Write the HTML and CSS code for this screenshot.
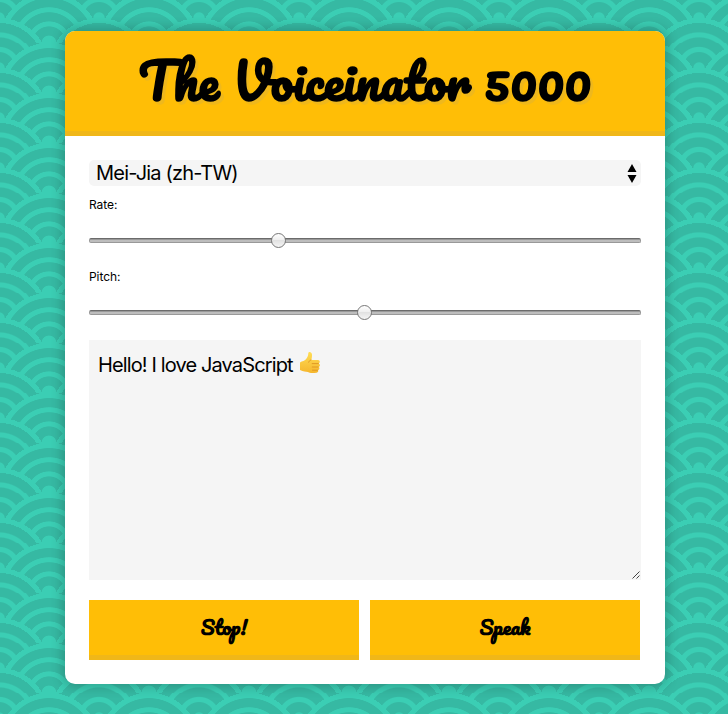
FILE: index.html
```html
<!DOCTYPE html>
<html lang="en">
<head>
<meta charset="utf-8">
<title>The Voiceinator 5000</title>
<link rel="stylesheet" href="styles.css">
</head>
<body>
<main class="voiceinator">
  <h1>The Voiceinator 5000</h1>
  <div class="controls">
    <div class="voice-select"><span>Mei-Jia (zh-TW)</span>
      <svg class="arrows" width="10" height="19" viewBox="0 0 10 19"><path d="M5 0 9.500 8H.5ZM.5 11h9L5 19Z"/></svg>
    </div>
    <div class="label">Rate:</div>
    <div class="range rate"><i class="thumb"></i></div>
    <div class="label">Pitch:</div>
    <div class="range pitch"><i class="thumb"></i></div>
    <div class="message"><span>Hello! I love JavaScript</span>
      <svg class="emoji" width="22" height="24" viewBox="0 0 22 24">
        <defs><linearGradient id="skin" x2="0" y2="1"><stop stop-color="#ffdd55"/><stop offset="1" stop-color="#f5b62d"/></linearGradient></defs>
        <path d="M1 11.500C3 10 6 10 7.500 7.500 9 5.500 9.200 4 9.300 2c.2-1.800 3.500-1.500 3.700 1.500.1 2-.3 4-.6 5.500l6.600.1c2.200.2 2.400 2.800.6 3.400 1.900.5 1.800 3 .1 3.400 1.300.7.9 2.900-.7 3.100.7 1 0 2.500-1.400 2.700-4 .6-6.600.7-8.600-.7-2.500-.2-4.500-.5-8-2Z" fill="url(#skin)"/>
        <path d="M13.200 12.600h6.200M13.300 16h5.800M13.500 19.200h5M12 9c-1.300.4-2 1-2.300 2.200" fill="none" stroke="#d98d20" stroke-width=".8" stroke-linecap="round"/>
      </svg>
      <svg class="grip" width="8" height="8" viewBox="0 0 8 8"><path d="m.5 7.500 7-7M4.500 7.500l3-3"/></svg>
    </div>
    <div class="buttons">
      <button type="button">Stop!</button>
      <button type="button">Speak</button>
    </div>
  </div>
</main>
</body>
</html>
```
FILE: styles.css
```css
* { box-sizing: border-box; }

html {
  --base: #36b9a3;
  --line: #3bceb4;
  min-height: 100%;
  background-color: var(--base);
  background-image:
    radial-gradient(circle at 100% 150%, var(--base) 24%, var(--line) 25%, var(--line) 28%, var(--base) 29%, var(--base) 36%, var(--line) 36%, var(--line) 40%, transparent 40%, transparent),
    radial-gradient(circle at 0 150%, var(--base) 24%, var(--line) 25%, var(--line) 28%, var(--base) 29%, var(--base) 36%, var(--line) 36%, var(--line) 40%, transparent 40%, transparent),
    radial-gradient(circle at 50% 100%, var(--line) 10%, var(--base) 11%, var(--base) 23%, var(--line) 24%, var(--line) 30%, var(--base) 31%, var(--base) 43%, var(--line) 44%, var(--line) 50%, var(--base) 51%, var(--base) 63%, var(--line) 64%, var(--line) 71%, transparent 71%, transparent),
    radial-gradient(circle at 100% 50%, var(--line) 5%, var(--base) 6%, var(--base) 15%, var(--line) 16%, var(--line) 20%, var(--base) 21%, var(--base) 30%, var(--line) 31%, var(--line) 35%, var(--base) 36%, var(--base) 45%, var(--line) 46%, var(--line) 49%, transparent 50%, transparent),
    radial-gradient(circle at 0 50%, var(--line) 5%, var(--base) 6%, var(--base) 15%, var(--line) 16%, var(--line) 20%, var(--base) 21%, var(--base) 30%, var(--line) 31%, var(--line) 35%, var(--base) 36%, var(--base) 45%, var(--line) 46%, var(--line) 49%, transparent 50%, transparent);
  background-size: 100px 50px;
  background-position: -1px -7px;
}

body {
  margin: 0;
  padding: 31px 63px 30px 65px;
  color: #000;
  font-family: Inter, "Liberation Sans", sans-serif;
}

.voiceinator {
  width: 600px;
  height: 653px;
  overflow: hidden;
  border-radius: 10px;
  background: #fff;
  box-shadow: 0 0 12px 3px rgba(0, 0, 0, .2);
}

h1 {
  height: 105px;
  margin: 0;
  border-bottom: 5px solid #f0b719;
  background: #ffbe06;
  font: 700 50px/98px Pacifico, cursive;
  text-align: center;
  text-shadow: 3px 3px 0 #efb81c;
  white-space: nowrap;
}

.controls { padding: 24px; }

.voice-select {
  display: flex;
  align-items: center;
  justify-content: space-between;
  height: 26px;
  padding: 0 4px 0 7px;
  border-radius: 5px;
  background: #f5f5f5;
  font-size: 20px;
  letter-spacing: -.8px;
}

.label { margin-top: 11px; font-size: 12px; line-height: 16px; letter-spacing: -.05px; }
.range + .label { margin-top: 26px; }

.range {
  height: 5px;
  margin-top: 25px;
  border: 1px solid #999;
  border-top: 1px solid #6b6b6b;
  border-radius: 2px;
  background: linear-gradient(#999 1px, #bdbdbd 1px);
}

.thumb {
  display: block;
  width: 15px;
  height: 15px;
  margin-top: -6px;
  border: 1px solid #777;
  border-radius: 50%;
  background: linear-gradient(#fff, #eee 49%, #e2e2e2 50%, #f5f5f5);
}
.rate .thumb { margin-left: 181px; }
.pitch .thumb { margin-left: 267px; }

.message {
  position: relative;
  display: flex;
  align-items: flex-start;
  height: 240px;
  margin-top: 25px;
  padding: 12px 9px;
  background: #f5f5f5;
  font-size: 20px;
  line-height: 26px;
  letter-spacing: -.87px;
}
.emoji { margin: -1px 0 0 6px; }
.grip { position: absolute; right: 1px; bottom: 1px; fill: none; stroke: #444; }

.buttons { display: flex; gap: 11px; margin-top: 20px; }
button {
  width: 270px;
  height: 60px;
  padding: 0 0 1px;
  border: 0;
  border-bottom: 5px solid #f0b719;
  background: #ffbe06;
  color: #000;
  font: 700 20px/54px Pacifico, cursive;
}
```
